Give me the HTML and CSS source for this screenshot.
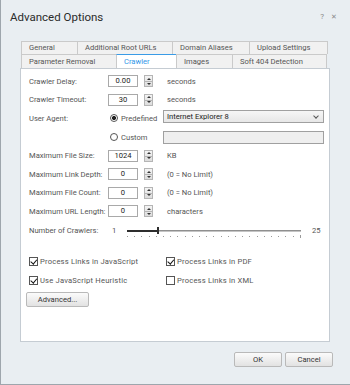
FILE: index.html
```html
<!DOCTYPE html>
<html lang="en">
<head>
    <meta charset="UTF-8">
    <title>Advanced Options</title>
    <link rel="stylesheet" href="styles.css">
</head>
<body>
    <div class="window">
        <div class="titlebar">
            <span class="title">Advanced Options</span>
            <span class="ctl">?</span>
            <span class="ctl close">&#x2715;</span>
        </div>

        <div class="tabs">
            <div class="tab-row">
                <div class="tab w55">General</div>
                <div class="tab w95">Additional Root URLs</div>
                <div class="tab w77">Domain Aliases</div>
                <div class="tab w78 last">Upload Settings</div>
            </div>
            <div class="tab-row">
                <div class="tab w95">Parameter Removal</div>
                <div class="tab w60 active">Crawler</div>
                <div class="tab w56">Images</div>
                <div class="tab w94 last">Soft 404 Detection</div>
            </div>
        </div>

        <div class="panel">
            <div class="row">
                <span class="label">Crawler Delay:</span>
                <span class="spin"><span class="spin-box">0.00</span><span class="spin-btn"></span></span>
                <span class="unit">seconds</span>
            </div>
            <div class="row">
                <span class="label">Crawler Timeout:</span>
                <span class="spin"><span class="spin-box">30</span><span class="spin-btn"></span></span>
                <span class="unit">seconds</span>
            </div>
            <div class="row">
                <span class="label">User Agent:</span>
                <span class="radio-opt"><span class="radio on"></span>Predefined</span>
                <span class="select">Internet Explorer 8<span class="chev"></span></span>
            </div>
            <div class="row">
                <span class="label"></span>
                <span class="radio-opt"><span class="radio"></span>Custom</span>
                <span class="textbox"></span>
            </div>
            <div class="row">
                <span class="label">Maximum File Size:</span>
                <span class="spin"><span class="spin-box">1024</span><span class="spin-btn"></span></span>
                <span class="unit">KB</span>
            </div>
            <div class="row">
                <span class="label">Maximum Link Depth:</span>
                <span class="spin"><span class="spin-box">0</span><span class="spin-btn"></span></span>
                <span class="unit">(0 = No Limit)</span>
            </div>
            <div class="row">
                <span class="label">Maximum File Count:</span>
                <span class="spin"><span class="spin-box">0</span><span class="spin-btn"></span></span>
                <span class="unit">(0 = No Limit)</span>
            </div>
            <div class="row">
                <span class="label">Maximum URL Length:</span>
                <span class="spin"><span class="spin-box">0</span><span class="spin-btn"></span></span>
                <span class="unit">characters</span>
            </div>
            <div class="row">
                <span class="label">Number of Crawlers:</span>
                <span class="slider-min">1</span>
                <div class="slider">
                    <div class="track"><span class="fill"></span><span class="thumb"></span><span class="rest"></span></div>
                    <div class="ticks" id="ticks"></div>
                </div>
                <span class="slider-max">25</span>
            </div>

            <div class="checks">
                <span class="check-opt"><span class="check on"></span>Process Links in JavaScript</span>
                <span class="check-opt"><span class="check on"></span>Process Links in PDF</span>
                <span class="check-opt"><span class="check on"></span>Use JavaScript Heuristic</span>
                <span class="check-opt"><span class="check"></span>Process Links in XML</span>
            </div>

            <button class="btn advanced">Advanced...</button>
        </div>

        <div class="footer">
            <button class="btn">OK</button>
            <button class="btn">Cancel</button>
        </div>
    </div>

    <script>
        let ticks = document.getElementById("ticks");
        for (let i = 0; i < 25; i++) {
            let t = document.createElement("span");
            t.className = i == 24 ? "tick end" : "tick";
            ticks.appendChild(t);
        }
    </script>
</body>
</html>
```

FILE: styles.css
```css
body {
    margin: 0;
    font-family: Roboto, "Liberation Sans", sans-serif;
    font-size: 7.6px;
    color: #555;
}
.window {
    width: 350px;
    height: 385px;
    box-sizing: border-box;
    background: #e9eef2;
    border-left: 1px solid #9ea6ad;
    border-bottom: 1px solid #9ea6ad;
}
.titlebar {
    height: 33px;
    display: flex;
    align-items: center;
    padding: 0 13px 0 9px;
}
.title {
    flex: 1;
    font-size: 11.5px;
    color: #2b2b2b;
}
.ctl {
    font-size: 8px;
    color: #8a8a8a;
    margin-left: 7px;
}
.close {
    font-size: 7px;
}

/* tabs */
.tabs {
    margin: 8px 0 0 20px;
}
.tab-row {
    display: flex;
}
.tab {
    box-sizing: border-box;
    height: 13px;
    line-height: 12px;
    padding-left: 7px;
    background: #f1f1f1;
    border-top: 1px solid #cacaca;
    border-left: 1px solid #cacaca;
    white-space: nowrap;
}
.tab-row + .tab-row .tab {
    height: 14px;
    line-height: 13px;
}
.tab.last {
    border-right: 1px solid #cacaca;
}
.tab.active {
    position: relative;
    z-index: 1;
    background: #fff;
    color: #2f96e8;
    border-top: 1px solid #3a9be6;
    height: 15px;
    margin-bottom: -1px;
}
.w55 { width: 56px; }
.w56 { width: 56px; }
.w60 { width: 60px; }
.w77 { width: 77px; }
.w78 { width: 79px; }
.w94 { width: 95px; }
.w95 { width: 95px; }

/* panel */
.panel {
    box-sizing: border-box;
    width: 310px;
    height: 274px;
    margin-left: 19px;
    background: #fff;
    border: 1px solid #c5ccd3;
    padding: 3px 0 0 8px;
}
.row {
    display: flex;
    align-items: center;
    height: 18.6px;
}
.label {
    width: 79px;
    flex: none;
}
.spin {
    display: flex;
    width: 59px;
    flex: none;
}
.spin-box {
    box-sizing: border-box;
    width: 30px;
    height: 12px;
    border: 1px solid #a9a9a9;
    text-align: center;
    line-height: 10px;
    color: #222;
}
.spin-btn {
    box-sizing: border-box;
    width: 9px;
    height: 12px;
    margin-left: 6px;
    border: 1px solid #b5b5b5;
    background:
        linear-gradient(#b5b5b5, #b5b5b5) 0 5px / 100% 1px no-repeat,
        linear-gradient(#f4f4f4, #dcdcdc);
    position: relative;
}
.spin-btn::before,
.spin-btn::after {
    content: "";
    position: absolute;
    left: 1.5px;
    border-left: 2px solid transparent;
    border-right: 2px solid transparent;
}
.spin-btn::before {
    top: 1.5px;
    border-bottom: 2px solid #333;
}
.spin-btn::after {
    top: 6.5px;
    border-top: 2px solid #333;
}
.unit {
    white-space: nowrap;
}
.radio-opt {
    width: 55px;
    flex: none;
    display: flex;
    align-items: center;
    margin-left: 2px;
    margin-right: -2px;
}
.radio {
    box-sizing: border-box;
    width: 8px;
    height: 8px;
    border: 1px solid #555;
    border-radius: 50%;
    margin-right: 3px;
    background: #fff;
}
.radio.on {
    background: radial-gradient(circle, #222 1.8px, #fff 2.3px);
}
.select {
    position: relative;
    box-sizing: border-box;
    width: 161px;
    height: 13px;
    border: 1px solid #a0a0a0;
    background: linear-gradient(#f6f6f6, #e7e7e7);
    padding-left: 3px;
    line-height: 11px;
    color: #222;
    margin-top: -3px;
}
.chev {
    position: absolute;
    right: 5px;
    top: 2.5px;
    width: 3px;
    height: 3px;
    border-right: 1px solid #555;
    border-bottom: 1px solid #555;
    transform: rotate(45deg);
}
.textbox {
    box-sizing: border-box;
    width: 161px;
    height: 13px;
    border: 1px solid #a0a0a0;
    background: #efefef;
}
.slider-min {
    width: 19px;
    flex: none;
    padding-left: 4px;
    box-sizing: border-box;
}
.slider {
    width: 174px;
    flex: none;
    height: 18px;
}
.track {
    display: flex;
    align-items: center;
    height: 9px;
    margin-top: 5px;
}
.fill {
    width: 30px;
    height: 2px;
    background: #2e2e2e;
}
.thumb {
    width: 2px;
    height: 7px;
    background: #2e2e2e;
}
.rest {
    flex: 1;
    height: 2px;
    background: linear-gradient(#8f8f8f 50%, #c4c4c4 50%);
}
.ticks {
    display: flex;
    justify-content: space-between;
    margin-top: 1px;
}
.tick {
    width: 1px;
    height: 1px;
    background: #9a9a9a;
}
.tick.end {
    height: 3px;
    margin-top: -1px;
}
.slider-max {
    margin-left: 11px;
}
.checks {
    display: grid;
    grid-template-columns: 137px 1fr;
    grid-auto-rows: 19px;
    align-items: center;
    margin-top: 13px;
}
.check-opt {
    display: flex;
    align-items: center;
    letter-spacing: 0.2px;
}
.check {
    box-sizing: border-box;
    width: 9px;
    height: 9px;
    border: 1px solid #555;
    background: #fff;
    margin-right: 2px;
    position: relative;
}
.check.on::after {
    content: "";
    position: absolute;
    left: 1.5px;
    top: -0.5px;
    width: 2.5px;
    height: 4.5px;
    border-right: 1.6px solid #111;
    border-bottom: 1.6px solid #111;
    transform: rotate(40deg);
}
.btn {
    box-sizing: border-box;
    height: 15px;
    width: 48px;
    border: 1px solid #b9b9b9;
    border-radius: 2px;
    background: linear-gradient(#fbfbfb, #e2e2e2);
    font-family: inherit;
    font-size: 7.6px;
    color: #333;
    padding: 0;
}
.advanced {
    width: 63px;
    margin: 2px 0 0 -3px;
}
.footer {
    display: flex;
    justify-content: flex-end;
    gap: 3px;
    padding: 10px 17px 0 0;
}
```
